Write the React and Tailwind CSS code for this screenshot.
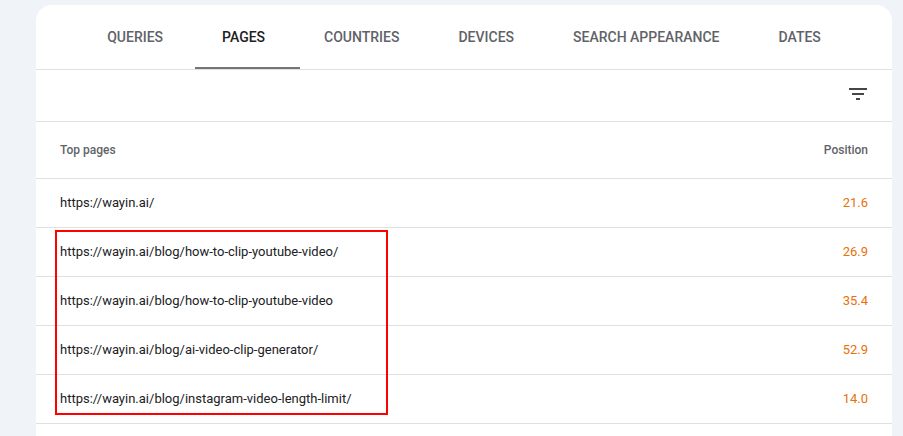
import React from 'react';

const tabs = ['Queries', 'Pages', 'Countries', 'Devices', 'Search appearance', 'Dates'];

const rows = [
  { page: 'https://wayin.ai/', position: '21.6' },
  { page: 'https://wayin.ai/blog/how-to-clip-youtube-video/', position: '26.9' },
  { page: 'https://wayin.ai/blog/how-to-clip-youtube-video', position: '35.4' },
  { page: 'https://wayin.ai/blog/ai-video-clip-generator/', position: '52.9' },
  { page: 'https://wayin.ai/blog/instagram-video-length-limit/', position: '14.0' },
];

const FilterIcon = () => (
  <svg width="24" height="24" viewBox="0 0 24 24" className="fill-[#444746]">
    <path d="M10 18h4v-2h-4v2zM3 6v2h18V6H3zm3 7h12v-2H6v2z" />
  </svg>
);

export default function App() {
  return (
    <div className="h-[436px] bg-[#f0f4f9] pt-[5px] pl-[36px] pr-[11px] font-['Roboto',sans-serif] overflow-hidden">
      <div className="relative bg-white rounded-t-[16px] h-full">
        {/* ── Tabs ── */}
        <div className="flex justify-center h-[65px] border-b border-[#e0e0e0]">
          {tabs.map((tab) => {
            const active = tab === 'Pages';
            return (
              <div
                key={tab}
                className={`relative flex items-center px-[29.5px] text-[14px] font-medium uppercase ${
                  active ? 'text-[#202124]' : 'text-[#5f6368]'
                }`}
              >
                <span className="mt-[1px]">{tab}</span>
                {active && <div className="absolute left-[2.5px] right-[-5.5px] bottom-0 h-[2px] bg-[#757575]" />}
              </div>
            );
          })}
        </div>

        {/* ── Filter bar ── */}
        <div className="flex justify-end items-center h-[52px] pr-[22px] pb-[4px] border-b border-[#e0e0e0]">
          <FilterIcon />
        </div>

        {/* ── Table ── */}
        <div className="flex justify-between items-center h-[57px] px-[24px] border-b border-[#e0e0e0] text-[12px] font-medium text-[#5f6368]">
          <span>Top pages</span>
          <span>Position</span>
        </div>
        {rows.map((row) => (
          <div
            key={row.page}
            className="flex justify-between items-center h-[49px] px-[24px] border-b border-[#e0e0e0] text-[13px]"
          >
            <span className="text-[#202124]">{row.page}</span>
            <span className="text-[#e8710a]">{row.position}</span>
          </div>
        ))}

        {/* highlight box */}
        <div className="absolute left-[19px] top-[225px] w-[333px] h-[185px] border-2 border-[#ff0000] pointer-events-none" />
      </div>
    </div>
  );
}
